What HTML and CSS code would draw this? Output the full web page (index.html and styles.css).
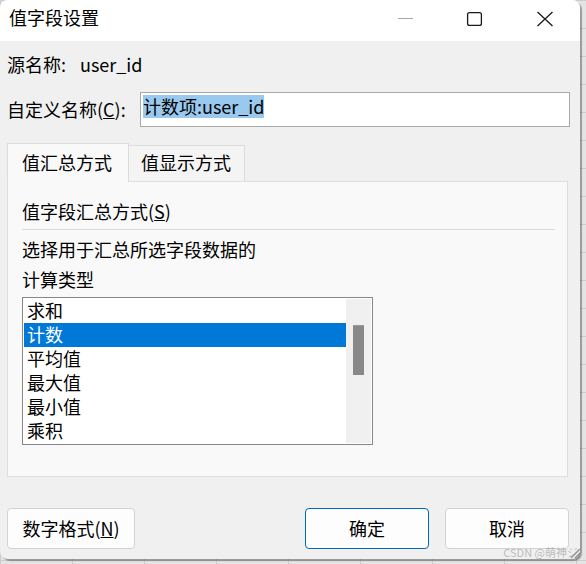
FILE: index.html
```html
<!DOCTYPE html>
<html lang="zh-CN">
<head>
<meta charset="utf-8">
<title>值字段设置</title>
<link rel="stylesheet" href="styles.css">
</head>
<body>
<div class="dialog">
  <div class="titlebar">
    <div class="title">值字段设置</div>
    <div class="cap"><svg width="70" height="41" viewBox="0 0 70 41"><line x1="28" y1="18.5" x2="43" y2="18.5" stroke="#a6a6a6" stroke-width="1"/></svg></div>
    <div class="cap"><svg width="70" height="41" viewBox="0 0 70 41"><rect x="27.6" y="12.6" width="13.8" height="12.8" rx="2" fill="none" stroke="#1a1a1a" stroke-width="1.3"/></svg></div>
    <div class="cap"><svg width="70" height="41" viewBox="0 0 70 41"><path d="M27.5 12 L42.5 26 M42.5 12 L27.5 26" stroke="#1a1a1a" stroke-width="1.3" fill="none"/></svg></div>
  </div>
  <div class="content">
    <div class="row1"><span class="lbl1">源名称:</span><span>user_id</span></div>
    <div class="row2">
      <span class="lbl2">自定义名称(<u>C</u>):</span>
      <div class="input"><span class="sel">计数项:user_id</span></div>
    </div>
    <div class="tabs">
      <div class="tab active">值汇总方式</div>
      <div class="tab other">值显示方式</div>
    </div>
    <div class="panel">
      <div class="heading">值字段汇总方式(<u>S</u>)</div>
      <div class="sep"></div>
      <div class="desc">选择用于汇总所选字段数据的<br>计算类型</div>
      <div class="list">
        <div class="items">
          <div class="item">求和</div>
          <div class="item selected">计数</div>
          <div class="item">平均值</div>
          <div class="item">最大值</div>
          <div class="item">最小值</div>
          <div class="item">乘积</div>
        </div>
        <div class="scroll"><div class="thumb"></div></div>
      </div>
    </div>
    <div class="buttons">
      <div class="btn num">数字格式(<u>N</u>)</div>
      <div class="btn ok">确定</div>
      <div class="btn cancel">取消</div>
    </div>
  </div>
</div>
<div class="wm">CSDN @萌神ジ</div>
<svg class="grip" width="14" height="14" viewBox="0 0 14 14"><path d="M13 4 L4 13 M13 8 L8 13 M13 11 L11 13" stroke="#8c8c8c" stroke-width="1.2" fill="none"/></svg>
</body>
</html>
```
FILE: styles.css
```css
* { box-sizing: border-box; }
html, body { margin: 0; padding: 0; }
body {
  width: 586px;
  height: 564px;
  overflow: hidden;
  position: relative;
  background-color: #e4e4e4;
  background-image:
    linear-gradient(#cdcdcd 1px, transparent 1px),
    linear-gradient(90deg, #cdcdcd 1px, transparent 1px);
  background-size: 72px 28px;
  font-family: "Noto Sans CJK SC", "Microsoft YaHei", sans-serif;
  font-size: 18px;
  color: #000;
}
.dialog {
  width: 580px;
  height: 559px;
  background: #f0f0f0;
  border-radius: 8px;
  box-shadow: 2px 2px 1px rgba(0, 0, 0, 0.32);
  overflow: hidden;
  display: flex;
  flex-direction: column;
}
.titlebar {
  height: 41px;
  flex-shrink: 0;
  background: #fff;
  display: flex;
}
.title {
  flex: 1;
  padding: 6px 0 0 9px;
  line-height: 23px;
}
.cap { width: 70px; height: 41px; }
.cap svg { display: block; }
.content {
  flex: 1;
  padding: 0 11px 0 7px;
  display: flex;
  flex-direction: column;
}
.row1 {
  margin-top: 11px;
  height: 25px;
  line-height: 25px;
  display: flex;
}
.lbl1 { width: 73px; }
.row2 {
  margin-top: 15px;
  height: 35px;
  display: flex;
  align-items: center;
}
.lbl2 { width: 133px; flex-shrink: 0; line-height: 25px; }
.input {
  width: 430px;
  height: 35px;
  flex-shrink: 0;
  border: 1px solid #a9a9a9;
  background: #fff;
  padding: 2px 0 0 2px;
  line-height: 23px;
}
.sel {
  display: inline-block;
  background: #99c9ef;
  color: #000;
  line-height: 23px;
  height: 23px;
}
.tabs {
  margin-top: 16px;
  height: 38px;
  display: flex;
  align-items: flex-start;
  position: relative;
  z-index: 1;
}
.tab {
  border: 1px solid #dcdcdc;
  border-bottom: none;
  line-height: 23px;
}
.tab.active {
  width: 122px;
  height: 39px;
  background: #f9f9f9;
  padding: 7px 0 0 14px;
}
.tab.other {
  width: 116px;
  height: 36px;
  margin-top: 2px;
  border-left: none;
  background: #f4f4f4;
  padding: 5px 0 0 12px;
}
.panel {
  width: 561px;
  height: 296px;
  border: 1px solid #dedede;
  background: #f9f9f9;
  padding: 14px 12px 0 14px;
}
.heading { height: 30px; line-height: 30px; }
.sep { margin-top: 3px; height: 1px; background: #d9d9d9; }
.desc { margin-top: 4px; line-height: 30px; }
.list {
  margin-top: 3px;
  width: 351px;
  height: 148px;
  border: 1px solid #86868b;
  background: #fff;
  padding: 1px;
  display: flex;
}
.items { width: 322px; }
.item {
  height: 24px;
  line-height: 23px;
  padding-left: 3px;
}
.item.selected { background: #0078d7; color: #fff; }
.scroll { width: 25px; background: #f0f0f0; }
.thumb {
  margin: 26px 0 0 7px;
  width: 11px;
  height: 50px;
  background: #888;
  border-top: 1px solid #9a9a9a;
}
.buttons {
  margin-top: 31px;
  display: flex;
}
.btn {
  height: 41px;
  border: 1px solid #d2d2d2;
  border-radius: 4px;
  background: #fdfdfd;
  display: flex;
  align-items: center;
  justify-content: center;
  line-height: 24px;
  padding-bottom: 1px;
}
.btn.num { width: 128px; }
.btn.ok { width: 124px; margin-left: auto; border-color: #0067c0; }
.btn.cancel { width: 124px; margin-left: 16px; }
.wm {
  position: absolute;
  right: 8px;
  bottom: 5px;
  font-size: 11px;
  line-height: 14px;
  color: rgba(140, 140, 140, 0.55);
}
.grip {
  position: absolute;
  left: 567px;
  top: 545px;
}
```
